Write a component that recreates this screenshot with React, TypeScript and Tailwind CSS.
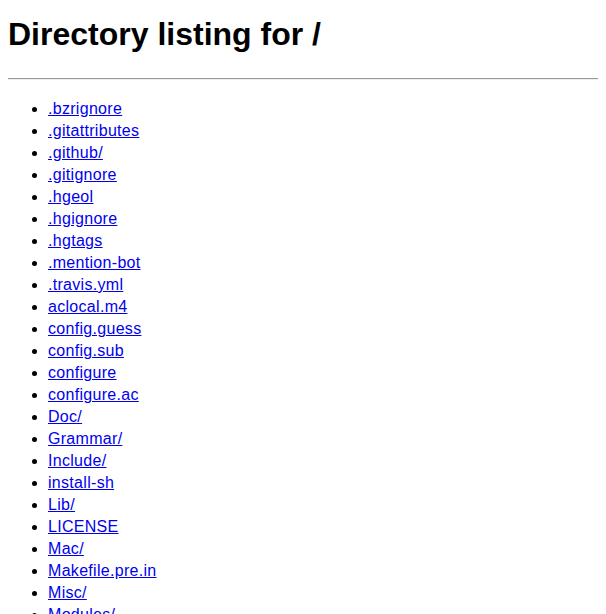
export default function App() {
  const files = [
    ".bzrignore",
    ".gitattributes",
    ".github/",
    ".gitignore",
    ".hgeol",
    ".hgignore",
    ".hgtags",
    ".mention-bot",
    ".travis.yml",
    "aclocal.m4",
    "config.guess",
    "config.sub",
    "configure",
    "configure.ac",
    "Doc/",
    "Grammar/",
    "Include/",
    "install-sh",
    "Lib/",
    "LICENSE",
    "Mac/",
    "Makefile.pre.in",
    "Misc/",
    "Modules/",
    "Objects/",
    "Parser/",
    "PC/",
    "PCbuild/",
    "Programs/",
  ];
  return (
    <div
      className="px-2 pb-2 bg-white text-black min-h-[614px]"
      style={{ fontFamily: '"Liberation Sans", Arial, sans-serif' }}
    >
      <h1 className="pt-[16px] mb-[26px] text-[32px] font-bold leading-[36px]">
        Directory listing for /
      </h1>
      <hr className="h-0 border-t border-t-[#9a9a9a] border-b border-b-[#eeeeee]" />
      <ul className="mt-[18px] pl-10 list-disc text-[16px] leading-[22px] tracking-[0.3px]">
        {files.map((f) => (
          <li key={f}>
            <a href="#" className="text-[#0000ee] underline">
              {f}
            </a>
          </li>
        ))}
      </ul>
    </div>
  );
}
